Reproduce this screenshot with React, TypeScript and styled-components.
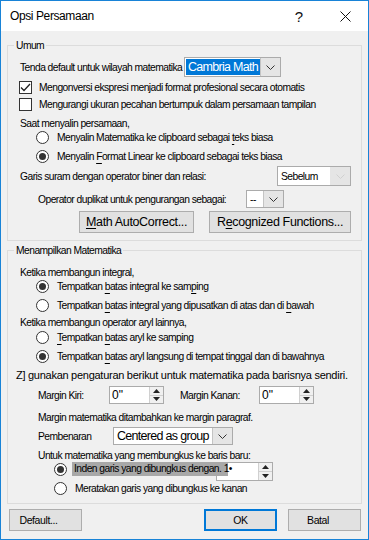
import React from 'react'
import styled, { createGlobalStyle } from 'styled-components'

const GlobalStyle = createGlobalStyle`
  html, body {
    margin: 0;
    padding: 0;
    background: #fff;
  }
  body {
    font-family: 'Liberation Sans', Arial, sans-serif;
    color: #000;
  }
`

const Chevron: React.FC<{ color?: string }> = ({ color = '#333' }) => (
    <svg width="9" height="5" viewBox="0 0 9 5">
        <polyline points="0.5,0.5 4.5,4.5 8.5,0.5" fill="none" stroke={color} strokeWidth="1" />
    </svg>
)

const Radio: React.FC<{ checked?: boolean }> = ({ checked }) => (
    <RadioCircle>{checked && <RadioDot />}</RadioCircle>
)

const Spin: React.FC<{ w: number; h: number; value?: string }> = ({ w, h, value }) => (
    <SpinBox $w={w} $h={h}>
        <SpinValue>{value}</SpinValue>
        <SpinButtons>
            <SpinBtn>
                <svg width="7" height="4" viewBox="0 0 7 4"><polygon points="0,4 3.5,0 7,4" fill="#222" /></svg>
            </SpinBtn>
            <SpinBtn>
                <svg width="7" height="4" viewBox="0 0 7 4"><polygon points="0,0 3.5,4 7,0" fill="#222" /></svg>
            </SpinBtn>
        </SpinButtons>
    </SpinBox>
)

const App: React.FC = () => {
    return (
        <>
            <GlobalStyle />
            <Window>
                <TitleBar>
                    <Title>Opsi Persamaan</Title>
                    <CaptionBtn>?</CaptionBtn>
                    <CaptionBtn>
                        <svg width="11" height="11" viewBox="0 0 11 11">
                            <path d="M0.5 0.5 L10.5 10.5 M10.5 0.5 L0.5 10.5" stroke="#111" strokeWidth="1" />
                        </svg>
                    </CaptionBtn>
                </TitleBar>
                <Body>
                    <Group $mt={14} $pb={7}>
                        <Legend>Umum</Legend>
                        <Row $mt={11} $h={20} $pl={12}>
                            <Label $w={164}>Tenda default untuk wilayah matematika</Label>
                            <Combo $w={97} $h={20}>
                                <ComboValue $selected $big>Cambria Math</ComboValue>
                                <DropBtn $w={19}><Chevron /></DropBtn>
                            </Combo>
                        </Row>
                        <Row $mt={4} $pl={11}>
                            <CheckBox>
                                <svg width="11" height="11" viewBox="0 0 11 11">
                                    <polyline points="1,5.5 4,8.5 10,2" fill="none" stroke="#222" strokeWidth="1.3" />
                                </svg>
                            </CheckBox>
                            <Label>Mengonversi ekspresi menjadi format profesional secara otomatis</Label>
                        </Row>
                        <Row $mt={4} $pl={11}>
                            <CheckBox />
                            <Label>Mengurangi ukuran pecahan bertumpuk dalam persamaan tampilan</Label>
                        </Row>
                        <Row $mt={6} $pl={12}>
                            <Label>Saat menyalin persamaan,</Label>
                        </Row>
                        <Row $mt={1} $pl={28}>
                            <Radio />
                            <Label>Menyalin Matematika ke clipboard sebagai <u>t</u>eks biasa</Label>
                        </Row>
                        <Row $mt={6} $pl={28}>
                            <Radio checked />
                            <Label>Menyalin <u>F</u>ormat Linear ke clipboard sebagai teks biasa</Label>
                        </Row>
                        <Row $mt={3} $h={20} $pl={12}>
                            <Label $w={257}>Garis suram dengan operator biner dan relasi:</Label>
                            <Combo $w={74} $h={20}>
                                <ComboValue>Sebelum</ComboValue>
                                <DropBtn $w={19} $flat><Chevron color="#d0d0d0" /></DropBtn>
                            </Combo>
                        </Row>
                        <Row $mt={4} $h={18} $pl={30}>
                            <Label $w={208}>Operator duplikat untuk pengurangan sebagai:</Label>
                            <Combo $w={38} $h={18}>
                                <ComboValue>--</ComboValue>
                                <DropBtn $w={19}><Chevron /></DropBtn>
                            </Combo>
                        </Row>
                        <Row $mt={3} $h={22} $pl={71}>
                            <Button $w={115}><u>M</u>ath AutoCorrect...</Button>
                            <Button $w={142} $ml={15}>R<u>e</u>cognized Functions...</Button>
                        </Row>
                    </Group>

                    <Group $mt={9} $pb={8}>
                        <Legend>Menampilkan Matematika</Legend>
                        <Row $mt={15} $pl={12}>
                            <Label>Ketika membangun integral,</Label>
                        </Row>
                        <Row $mt={1} $pl={28}>
                            <Radio checked />
                            <Label>Tempatkan <u>b</u>atas integral ke sam<u>p</u>ing</Label>
                        </Row>
                        <Row $mt={6} $pl={28}>
                            <Radio />
                            <Label>Tempatkan <u>b</u>atas integral yang dipusatkan di atas dan di <u>b</u>awah</Label>
                        </Row>
                        <Row $mt={4} $pl={12}>
                            <Label>Ketika membangun operator aryl lainnya,</Label>
                        </Row>
                        <Row $mt={2} $pl={28}>
                            <Radio />
                            <Label><u>T</u>empatkan <u>b</u>atas aryl ke samping</Label>
                        </Row>
                        <Row $mt={6} $pl={28}>
                            <Radio checked />
                            <Label>Tempatkan <u>b</u>atas aryl langsung di tempat tinggal dan di bawahnya</Label>
                        </Row>
                        <Row $mt={5} $h={15} $pl={8}>
                            <Lead>Z] gunakan pengaturan berikut untuk matematika pada barisnya sendiri.</Lead>
                        </Row>
                        <Row $mt={3} $h={18} $pl={30}>
                            <Label $w={71}>Margin Kiri:</Label>
                            <Spin w={55} h={18} value={'0"'} />
                            <Label $w={79} $ml={16}>Margin Kanan:</Label>
                            <Spin w={55} h={18} value={'0"'} />
                        </Row>
                        <Row $mt={7} $pl={30}>
                            <Label>Margin matematika ditambahkan ke margin paragraf.</Label>
                        </Row>
                        <Row $mt={3} $h={18} $pl={30}>
                            <Label $w={75}>Pembenaran</Label>
                            <Combo $w={120} $h={18}>
                                <ComboValue $big>Centered as group</ComboValue>
                                <DropBtn $w={19}><Chevron /></DropBtn>
                            </Combo>
                        </Row>
                        <Row $mt={4} $pl={30}>
                            <Label>Untuk matematika yang membungkus ke baris baru:</Label>
                        </Row>
                        <Row $mt={0} $h={19} $pl={46} $top>
                            <RadioSlot>
                                <Radio checked />
                            </RadioSlot>
                            <Highlight>Inden garis yang dibungkus dengan. 1•</Highlight>
                            <SpinOverlapped>
                                <Spin w={57} h={19} />
                            </SpinOverlapped>
                        </Row>
                        <Row $mt={1} $pl={46}>
                            <Radio />
                            <Label>Meratakan garis yang dibungkus ke kanan</Label>
                        </Row>
                    </Group>

                    <Row $mt={5} $h={22} $pl={2}>
                        <Button $w={73} $small $shift={14}>Default...</Button>
                        <Button $w={73} $ml={122} $small $primary>OK</Button>
                        <Button $w={73} $ml={11} $small $shift={13}>Batal</Button>
                    </Row>
                </Body>
            </Window>
        </>
    )
}

const Window = styled.div`
  width: 369px;
  height: 540px;
  box-sizing: border-box;
  border: 1px solid #1883d7;
  background: #f0f0f0;
  display: flex;
  flex-direction: column;
  overflow: hidden;
`
const TitleBar = styled.div`
  height: 30px;
  background: #fff;
  display: flex;
  align-items: center;
  padding-left: 9px;
`
const Title = styled.div`
  flex: 1;
  font-size: 12px;
  letter-spacing: -0.4px;
  color: #000;
`
const CaptionBtn = styled.div`
  width: 46px;
  height: 30px;
  display: flex;
  align-items: center;
  justify-content: center;
  font-size: 15px;
  color: #111;
`
const Body = styled.div`
  padding: 0 6px;
  display: flex;
  flex-direction: column;
`
const Group = styled.div<{ $mt: number; $pb: number }>`
  position: relative;
  margin-top: ${p => p.$mt}px;
  border: 1px solid #dcdcdc;
  padding-bottom: ${p => p.$pb}px;
  display: flex;
  flex-direction: column;
`
const Legend = styled.span`
  position: absolute;
  top: -7px;
  left: 6px;
  padding: 0 2px;
  background: #f0f0f0;
  font-size: 10.3px;
  line-height: 13px;
  letter-spacing: -0.55px;
`
const Row = styled.div<{ $mt?: number; $pl?: number; $h?: number; $top?: boolean }>`
  display: flex;
  align-items: ${p => (p.$top ? 'flex-start' : 'center')};
  margin-top: ${p => p.$mt ?? 0}px;
  padding-left: ${p => p.$pl ?? 0}px;
  height: ${p => p.$h ?? 13}px;
`
const Label = styled.span<{ $w?: number; $ml?: number }>`
  font-size: 10.3px;
  line-height: 13px;
  letter-spacing: -0.55px;
  white-space: nowrap;
  ${p => (p.$w ? `width: ${p.$w}px; flex: none;` : '')}
  margin-left: ${p => p.$ml ?? 0}px;
  u {
    text-decoration: underline;
    text-underline-offset: 3px;
  }
`
const Lead = styled.span`
  font-size: 11px;
  line-height: 15px;
  letter-spacing: -0.27px;
  white-space: nowrap;
`
const CheckBox = styled.div`
  width: 13px;
  height: 13px;
  box-sizing: border-box;
  border: 1px solid #333;
  background: #fff;
  display: flex;
  align-items: center;
  justify-content: center;
  margin-right: 7px;
  flex: none;
`
const RadioCircle = styled.div`
  width: 13px;
  height: 13px;
  box-sizing: border-box;
  border: 1px solid #333;
  border-radius: 50%;
  background: #fff;
  display: flex;
  align-items: center;
  justify-content: center;
  margin-right: 8px;
  flex: none;
`
const RadioDot = styled.div`
  width: 7px;
  height: 7px;
  border-radius: 50%;
  background: #333;
`
const RadioSlot = styled.div`
  height: 15px;
  display: flex;
  align-items: center;
  & > div {
    margin-right: 5px;
  }
`
const Highlight = styled.span`
  position: relative;
  z-index: 1;
  width: 154px;
  padding-left: 2px;
  height: 14px;
  line-height: 14px;
  background: #a8a8a8;
  font-size: 10.3px;
  letter-spacing: -0.55px;
  white-space: nowrap;
`
const SpinOverlapped = styled.div`
  margin-left: -12px;
`
const Combo = styled.div<{ $w: number; $h: number }>`
  width: ${p => p.$w}px;
  height: ${p => p.$h}px;
  box-sizing: border-box;
  border: 1px solid #ababab;
  background: #fff;
  display: flex;
  padding: 1px 0 1px 1px;
  flex: none;
`
const ComboValue = styled.div<{ $selected?: boolean; $big?: boolean }>`
  flex: 1;
  display: flex;
  align-items: center;
  padding-left: 2px;
  background: ${p => (p.$selected ? '#0078d7' : '#fff')};
  color: ${p => (p.$selected ? '#fff' : '#000')};
  font-size: ${p => (p.$big ? 12.5 : 10.3)}px;
  letter-spacing: ${p => (p.$big ? -0.7 : -0.55)}px;
  white-space: nowrap;
  overflow: hidden;
`
const DropBtn = styled.div<{ $w: number; $flat?: boolean }>`
  width: ${p => p.$w}px;
  margin: -1px 0;
  background: #e5e5e5;
  border-left: 1px solid ${p => (p.$flat ? '#e5e5e5' : '#c4c4c4')};
  display: flex;
  align-items: center;
  justify-content: center;
  flex: none;
`
const Button = styled.div<{ $w: number; $ml?: number; $small?: boolean; $primary?: boolean; $shift?: number }>`
  width: ${p => p.$w}px;
  height: 22px;
  box-sizing: border-box;
  margin-left: ${p => p.$ml ?? 0}px;
  padding-right: ${p => p.$shift ?? 0}px;
  background: #e1e1e1;
  border: ${p => (p.$primary ? '2px solid #0078d7' : '1px solid #adadad')};
  display: flex;
  align-items: center;
  justify-content: center;
  font-size: ${p => (p.$small ? 10.5 : 12.5)}px;
  letter-spacing: ${p => (p.$small ? -0.4 : -0.35)}px;
  white-space: nowrap;
  flex: none;
  u {
    text-underline-offset: 2px;
  }
`
const SpinBox = styled.div<{ $w: number; $h: number }>`
  width: ${p => p.$w}px;
  height: ${p => p.$h}px;
  box-sizing: border-box;
  border: 1px solid #ababab;
  background: #fff;
  display: flex;
  flex: none;
`
const SpinValue = styled.div`
  flex: 1;
  display: flex;
  align-items: center;
  padding-left: 2px;
  font-size: 12px;
`
const SpinButtons = styled.div`
  width: 13px;
  display: flex;
  flex-direction: column;
  border-left: 1px solid #d0d0d0;
`
const SpinBtn = styled.div`
  flex: 1;
  display: flex;
  align-items: center;
  justify-content: center;
  background: #f0f0f0;
  & + & {
    border-top: 1px solid #d0d0d0;
  }
`

export default App
